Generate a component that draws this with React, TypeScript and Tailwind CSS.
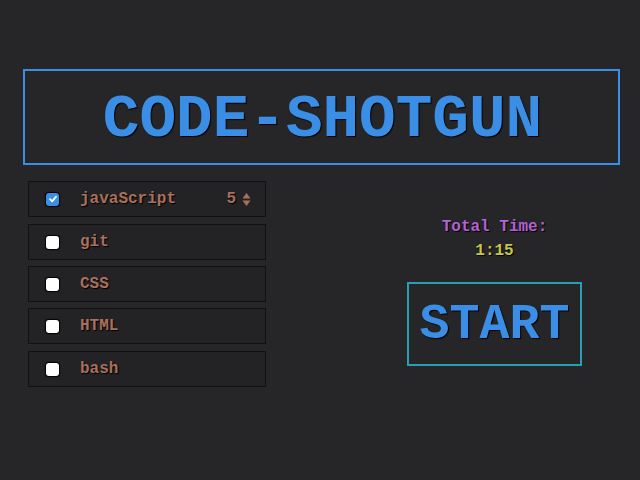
import React from "react";

const items = [
  { name: "javaScript", checked: true, mt: "mt-0" },
  { name: "git", checked: false, mt: "mt-[7px]" },
  { name: "CSS", checked: false, mt: "mt-[6px]" },
  { name: "HTML", checked: false, mt: "mt-[6px]" },
  { name: "bash", checked: false, mt: "mt-[7px]" },
];

export default function App() {
  return (
    <div className="w-[640px] h-[480px] bg-[#262628] font-['Courier_New','Liberation_Mono',monospace] font-bold [text-shadow:1px_1px_1px_#000] pt-[69px] pl-[23px]">
      <div className="w-[597px] h-[96px] border-2 border-[#3a8ee6] flex items-center justify-center">
        <span className="text-[61px] leading-none text-[#3a8ee6] pl-[2px] pt-[4px]">CODE-SHOTGUN</span>
      </div>
      <div className="flex mt-[16px]">
        <div className="ml-[5px] w-[238px] flex flex-col">
          {items.map((it) => (
            <div
              key={it.name}
              className={`${it.mt} h-[36px] border border-[#111113] bg-[#232325] flex items-center pl-[17px] pr-[14px]`}
            >
              {it.checked ? (
                <span className="w-[13px] h-[13px] rounded-[3px] bg-[#3a8ee6] flex items-center justify-center [box-shadow:0_0_1px_1px_#000]">
                  <svg width="10" height="10" viewBox="0 0 10 10">
                    <path d="M2 5.2 L4.2 7.4 L8 2.6" stroke="#fff" strokeWidth="1.8" fill="none" strokeLinecap="round" strokeLinejoin="round" />
                  </svg>
                </span>
              ) : (
                <span className="w-[13px] h-[13px] rounded-[3px] bg-white [box-shadow:0_0_1px_1px_#000]" />
              )}
              <span className="ml-[21px] text-[16px] text-[#a8705d] flex-1">{it.name}</span>
              {it.checked && (
                <span className="flex items-center gap-[6px] text-[16px] text-[#a8705d]">
                  5
                  <svg width="9" height="15" viewBox="0 0 9 15">
                    <path d="M4.5 1 L8.5 6.5 L0.5 6.5 Z" fill="#a8705d" />
                    <path d="M4.5 14 L8.5 8.5 L0.5 8.5 Z" fill="#a8705d" />
                  </svg>
                </span>
              )}
            </div>
          ))}
        </div>
        <div className="ml-[141px] w-[175px] flex flex-col items-center">
          <div className="mt-[35px] text-[16px] text-[#b462d6] leading-[22px]">Total Time:</div>
          <div className="mt-[2px] text-[16px] text-[#c6c64c] leading-[22px]">1:15</div>
          <div className="mt-[20px] w-[175px] h-[84px] border-2 border-[#2a9fb3] flex items-center justify-center">
            <span className="text-[50px] leading-none text-[#3a8ee6] pt-[2px]">START</span>
          </div>
        </div>
      </div>
    </div>
  );
}
